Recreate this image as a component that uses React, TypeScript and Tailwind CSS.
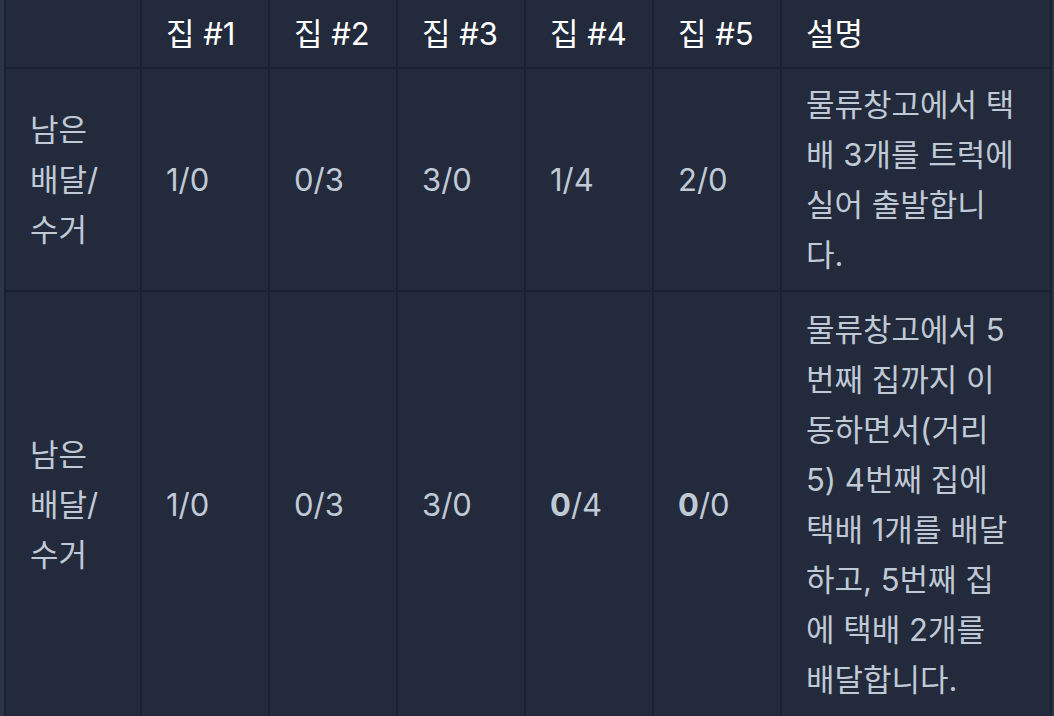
type Cell = { bold: string; rest: string };

type Row = {
  label: string[];
  cells: Cell[];
  desc: string[];
  pad: string;
};

const headers = ["집 #1", "집 #2", "집 #3", "집 #4", "집 #5", "설명"];

const rows: Row[] = [
  {
    label: ["남은", "배달/", "수거"],
    cells: [
      { bold: "", rest: "1/0" },
      { bold: "", rest: "0/3" },
      { bold: "", rest: "3/0" },
      { bold: "", rest: "1/4" },
      { bold: "", rest: "2/0" },
    ],
    desc: ["물류창고에서 택", "배 3개를 트럭에", "실어 출발합니", "다."],
    pad: "pt-[11px] pb-[10px]",
  },
  {
    label: ["남은", "배달/", "수거"],
    cells: [
      { bold: "", rest: "1/0" },
      { bold: "", rest: "0/3" },
      { bold: "", rest: "3/0" },
      { bold: "0", rest: "/4" },
      { bold: "0", rest: "/0" },
    ],
    desc: [
      "물류창고에서 5",
      "번째 집까지 이",
      "동하면서(거리",
      "5) 4번째 집에",
      "택배 1개를 배달",
      "하고, 5번째 집",
      "에 택배 2개를",
      "배달합니다.",
    ],
    pad: "pt-[13px] pb-[11px]",
  },
];

function Lines({ lines }: { lines: string[] }) {
  return (
    <>
      {lines.map((l, i) => (
        <span key={i} className="block whitespace-nowrap">
          {l}
        </span>
      ))}
    </>
  );
}

export default function App() {
  return (
    <div className="min-h-[716px] bg-[#2a3647] pl-1 font-['Inter','Noto_Sans_CJK_KR',sans-serif] text-[31px] leading-[50px]">
      <div className="grid w-[1048px] grid-cols-[134px_126px_126px_126px_126px_126px_268px] gap-[2px] bg-[#1a2131] px-[2px] pb-[2px]">
        {/* header */}
        <div className="bg-[#222a3b]" />
        {headers.map((h) => (
          <div
            key={h}
            className="flex items-center bg-[#222a3b] px-6 pt-[9px] pb-[8px] text-white"
          >
            {h}
          </div>
        ))}

        {rows.map((r, ri) => (
          <div key={ri} className="contents">
            <div className={`flex items-center bg-[#222a3b] px-6 text-[#c0c9d6] ${r.pad}`}>
              <div>
                <Lines lines={r.label} />
              </div>
            </div>
            {r.cells.map((c, ci) => (
              <div
                key={ci}
                className={`flex items-center bg-[#222a3b] px-6 text-[#c0c9d6] ${r.pad}`}
              >
                <span>
                  {c.bold && <strong className="font-bold">{c.bold}</strong>}
                  {c.rest}
                </span>
              </div>
            ))}
            <div className={`flex items-center bg-[#222a3b] px-6 text-[#c0c9d6] ${r.pad}`}>
              <div>
                <Lines lines={r.desc} />
              </div>
            </div>
          </div>
        ))}
      </div>
    </div>
  );
}
